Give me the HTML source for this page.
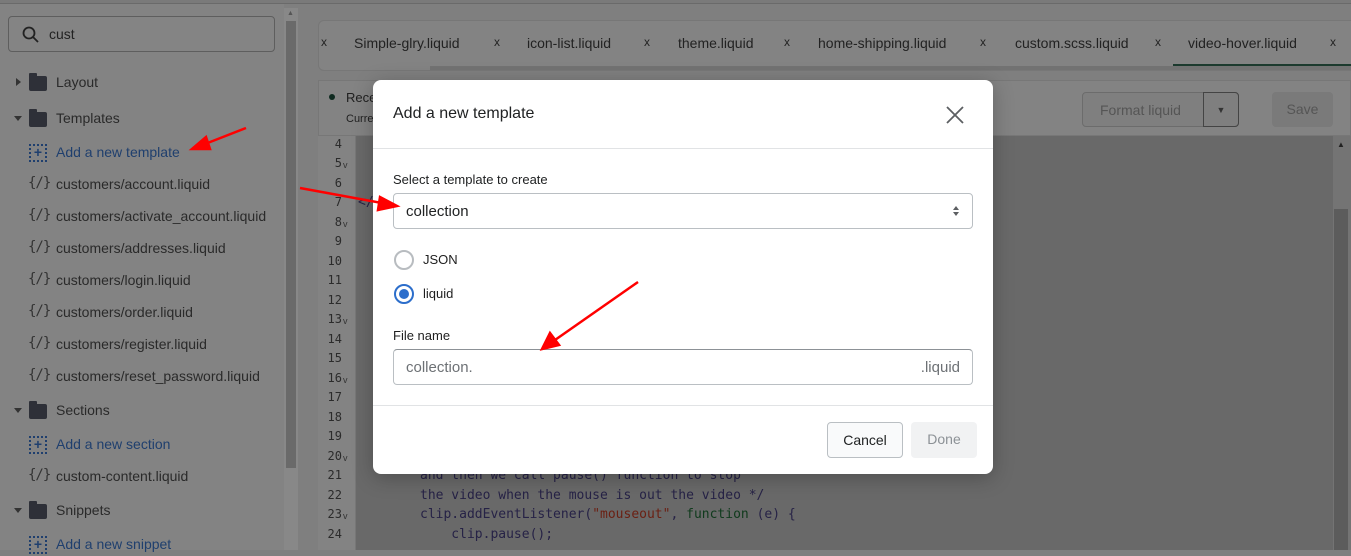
<!DOCTYPE html>
<html><head><meta charset="utf-8"><style>
*{box-sizing:border-box;margin:0;padding:0}
body{width:1351px;height:550px;overflow:hidden;background:#7f7f7f;font-family:"Liberation Sans",sans-serif;position:relative;color:#1f1f1f}
.abs{position:absolute}
.side{left:0;top:0;width:284px;height:550px;background:#838383}
.search{left:8px;top:16px;width:267px;height:36px;border:1px solid #5e5e5e;border-radius:4px;background:#848484;font-size:14px;padding:9px 0 0 40px;color:#222}
.it{left:0;height:20px;font-size:14px;color:#2a2a2a;white-space:nowrap}
.blue{color:#1f3f6e}
.folder{position:absolute;left:29px;top:2px;width:18px;height:15px;background:#2e3038;border-radius:1px 2px 2px 2px}
.folder:before{content:"";position:absolute;left:0;top:-3px;width:8px;height:4px;background:#2e3038;border-radius:1px 1px 0 0}
.tri{position:absolute;left:14px;top:5px;width:0;height:0}
.icn{position:absolute;left:28px;top:-1px;font-family:"DejaVu Sans Mono",monospace;font-size:14px;color:#333;letter-spacing:-1px}
.plus{position:absolute;left:29px;top:0;width:18px;height:18px;border:2px dotted #1f3f6e;color:#1f3f6e;font-size:14px;line-height:13px;text-align:center;font-weight:bold}
.txt{position:absolute;left:56px;top:0}
.code{font-family:"DejaVu Sans Mono",monospace;font-size:13px;color:#262246;white-space:pre}
.ln{left:320px;width:22px;text-align:right;font-family:"DejaVu Sans Mono",monospace;font-size:12px;color:#2b2b2b}
.fv{position:absolute;left:343px;font-size:9px;color:#333}
</style></head><body>
<div class="abs side"></div>
<div class="abs" style="left:0;top:0;width:1351px;height:4px;background:#7a7a7a;border-bottom:1px solid #6a6a6a"></div>
<div class="abs search"><svg class="abs" style="left:13px;top:9px" width="18" height="18" viewBox="0 0 18 18"><circle cx="7" cy="7" r="5.5" fill="none" stroke="#222" stroke-width="1.8"/><path d="M11 11l5 5" stroke="#222" stroke-width="1.8"/></svg>cust</div>
<div class="abs" style="left:284px;top:8px;width:14px;height:542px;background:#888"></div>
<div class="abs" style="left:286px;top:21px;width:10px;height:447px;background:#6a6a6a"></div>
<div class="abs" style="left:287px;top:10px;font-size:7px;color:#555">▲</div>

<div class="abs it" style="top:74px"><div class="tri" style="border-left:5px solid #333;border-top:4px solid transparent;border-bottom:4px solid transparent;left:16px;top:4px"></div><div class="folder"></div><div class="txt">Layout</div></div>
<div class="abs it" style="top:110px"><div class="tri" style="border-top:5px solid #333;border-left:4px solid transparent;border-right:4px solid transparent;top:6px"></div><div class="folder"></div><div class="txt">Templates</div></div>
<div class="abs it" style="top:144px"><div class="plus">+</div><div class="txt blue">Add a new template</div></div>
<div class="abs it" style="top:176px"><div class="icn">{/}</div><div class="txt">customers/account.liquid</div></div>
<div class="abs it" style="top:208px"><div class="icn">{/}</div><div class="txt">customers/activate_account.liquid</div></div>
<div class="abs it" style="top:240px"><div class="icn">{/}</div><div class="txt">customers/addresses.liquid</div></div>
<div class="abs it" style="top:272px"><div class="icn">{/}</div><div class="txt">customers/login.liquid</div></div>
<div class="abs it" style="top:304px"><div class="icn">{/}</div><div class="txt">customers/order.liquid</div></div>
<div class="abs it" style="top:336px"><div class="icn">{/}</div><div class="txt">customers/register.liquid</div></div>
<div class="abs it" style="top:368px"><div class="icn">{/}</div><div class="txt">customers/reset_password.liquid</div></div>
<div class="abs it" style="top:402px"><div class="tri" style="border-top:5px solid #333;border-left:4px solid transparent;border-right:4px solid transparent;top:6px"></div><div class="folder"></div><div class="txt">Sections</div></div>
<div class="abs it" style="top:436px"><div class="plus">+</div><div class="txt blue">Add a new section</div></div>
<div class="abs it" style="top:468px"><div class="icn">{/}</div><div class="txt">custom-content.liquid</div></div>
<div class="abs it" style="top:502px"><div class="tri" style="border-top:5px solid #333;border-left:4px solid transparent;border-right:4px solid transparent;top:6px"></div><div class="folder"></div><div class="txt">Snippets</div></div>
<div class="abs it" style="top:536px"><div class="plus">+</div><div class="txt blue">Add a new snippet</div></div>

<!-- tabs -->
<div class="abs" style="left:318px;top:20px;width:1040px;height:51px;background:#838383;border:1px solid #777;border-radius:6px 0 0 6px"></div>
<div class="abs" style="left:430px;top:66px;width:921px;height:4px;background:#727272"></div>
<div class="abs" style="left:1173px;top:64px;width:178px;height:2px;background:#1c3a2e"></div>
<div class="abs" style="top:35px;left:0;width:1351px;font-size:14px;color:#222;white-space:nowrap">
<span class="abs" style="left:321px;font-size:12px">x</span><span class="abs" style="left:354px">Simple-glry.liquid</span>
<span class="abs" style="left:494px;font-size:12px">x</span><span class="abs" style="left:527px">icon-list.liquid</span>
<span class="abs" style="left:644px;font-size:12px">x</span><span class="abs" style="left:678px">theme.liquid</span>
<span class="abs" style="left:784px;font-size:12px">x</span><span class="abs" style="left:818px">home-shipping.liquid</span>
<span class="abs" style="left:980px;font-size:12px">x</span><span class="abs" style="left:1015px">custom.scss.liquid</span>
<span class="abs" style="left:1155px;font-size:12px">x</span><span class="abs" style="left:1188px">video-hover.liquid</span>
<span class="abs" style="left:1330px;font-size:12px">x</span>
</div>
<!-- toolbar -->
<div class="abs" style="left:318px;top:80px;width:1033px;height:56px;background:#838383;border:1px solid #777"></div>
<div class="abs" style="left:329px;top:94px;width:6px;height:6px;border-radius:50%;background:#0f2a20"></div>
<div class="abs" style="left:346px;top:90px;font-size:13px">Rece</div>
<div class="abs" style="left:346px;top:113px;font-size:11px">Curre</div>
<div class="abs" style="left:1082px;top:92px;width:157px;height:35px;border:1px solid #6c6c6c;border-radius:4px;background:#7f7f7f;font-size:14px;color:#555;padding:9px 0 0 17px">Format liquid</div>
<div class="abs" style="left:1203px;top:92px;width:36px;height:35px;border:1px solid #444;border-radius:0 4px 4px 0;font-size:9px;color:#333;text-align:center;padding-top:12px">▼</div>
<div class="abs" style="left:1272px;top:92px;width:61px;height:35px;border-radius:4px;background:#7a7a7a;font-size:14px;color:#555;text-align:center;padding-top:9px">Save</div>
<!-- code -->
<div class="abs" style="left:318px;top:136px;width:38px;height:414px;background:#838383;border-right:1px solid #777"></div>
<div class="abs" style="left:356px;top:136px;width:977px;height:414px;background:#696969"></div>
<div class="abs" style="left:1333px;top:136px;width:18px;height:414px;background:#747474"></div>
<div class="abs" style="left:1334px;top:209px;width:14px;height:341px;background:#5c5c5c"></div>
<div class="abs" style="left:1337px;top:140px;font-size:8px;color:#222">▲</div>
<div class="abs ln" style="top:137px">4</div><div class="abs ln" style="top:156px">5</div><div class="abs ln" style="top:176px">6</div><div class="abs ln" style="top:195px">7</div><div class="abs ln" style="top:215px">8</div><div class="abs ln" style="top:234px">9</div><div class="abs ln" style="top:254px">10</div><div class="abs ln" style="top:273px">11</div><div class="abs ln" style="top:293px">12</div><div class="abs ln" style="top:312px">13</div><div class="abs ln" style="top:332px">14</div><div class="abs ln" style="top:351px">15</div><div class="abs ln" style="top:371px">16</div><div class="abs ln" style="top:390px">17</div><div class="abs ln" style="top:410px">18</div><div class="abs ln" style="top:429px">19</div><div class="abs ln" style="top:449px">20</div><div class="abs ln" style="top:468px">21</div><div class="abs ln" style="top:488px">22</div><div class="abs ln" style="top:507px">23</div><div class="abs ln" style="top:527px">24</div>
<div class="fv" style="top:160px">v</div><div class="fv" style="top:219px">v</div><div class="fv" style="top:316px">v</div><div class="fv" style="top:375px">v</div><div class="fv" style="top:453px">v</div><div class="fv" style="top:511px">v</div>
<div class="abs code" style="left:358px;top:195px">&lt;/</div>
<div class="abs code" style="left:420px;top:468px">and then we call pause() function to stop</div>
<div class="abs code" style="left:420px;top:488px">the video when the mouse is out the video */</div>
<div class="abs code" style="left:420px;top:507px">clip.addEventListener(<span style="color:#6a1f12">"mouseout"</span>, <span style="color:#0f3a1c">function</span> (e) {</div>
<div class="abs code" style="left:420px;top:527px">    clip.pause();</div>

<!-- modal -->
<div class="abs" style="left:373px;top:80px;width:620px;height:394px;background:#fff;border-radius:8px;box-shadow:0 4px 20px rgba(0,0,0,.25)">
 <div class="abs" style="left:20px;top:25px;font-size:16px;color:#202223">Add a new template</div>
 <svg class="abs" style="left:573px;top:26px" width="18" height="18" viewBox="0 0 18 18"><path d="M1 1L17 17M17 1L1 17" stroke="#5c5f62" stroke-width="1.8"/></svg>
 <div class="abs" style="left:0;top:68px;width:620px;height:1px;background:#e1e3e5"></div>
 <div class="abs" style="left:20px;top:92px;font-size:13px;color:#202223">Select a template to create</div>
 <div class="abs" style="left:20px;top:113px;width:580px;height:36px;border:1px solid #babfc3;border-radius:4px;font-size:15px;padding:9px 0 0 12px;color:#202223">collection
  <svg class="abs" style="right:12px;top:11px" width="8" height="12" viewBox="0 0 8 12"><path d="M4 1L7 5H1zM4 11L7 7H1z" fill="#5c5f62"/></svg></div>
 <div class="abs" style="left:21px;top:170px;width:20px;height:20px;border:2px solid #b8bcc0;border-radius:50%"></div>
 <div class="abs" style="left:50px;top:172px;font-size:13px">JSON</div>
 <div class="abs" style="left:21px;top:204px;width:20px;height:20px;border:2px solid #2c6ecb;border-radius:50%"><div style="margin:3px;width:10px;height:10px;border-radius:50%;background:#2c6ecb"></div></div>
 <div class="abs" style="left:50px;top:206px;font-size:13px">liquid</div>
 <div class="abs" style="left:20px;top:248px;font-size:13px">File name</div>
 <div class="abs" style="left:20px;top:269px;width:580px;height:36px;border:1px solid #babfc3;border-top-color:#8c9196;border-radius:4px;font-size:15px;padding:9px 12px 0 12px;color:#6d7175">collection.<span style="float:right">.liquid</span></div>
 <div class="abs" style="left:0;top:325px;width:620px;height:1px;background:#e1e3e5"></div>
 <div class="abs" style="left:454px;top:342px;width:76px;height:36px;border:1px solid #babfc3;border-radius:4px;background:#f9fafb;font-size:14px;text-align:center;padding-top:9px;color:#202223">Cancel</div>
 <div class="abs" style="left:538px;top:342px;width:66px;height:36px;border-radius:4px;background:#f1f2f3;font-size:14px;text-align:center;padding-top:9px;color:#8c9196">Done</div>
</div>

<!-- arrows -->
<svg class="abs" style="left:0;top:0" width="1351" height="550">
<g stroke="#f00" stroke-width="2.5" fill="#f00">
<line x1="246" y1="128" x2="205" y2="144"/><polygon points="192,149 206,137 210,149"/>
<line x1="300" y1="188" x2="382" y2="203"/><polygon points="397,206 380,197 378,210"/>
<line x1="638" y1="282" x2="555" y2="340"/><polygon points="542,349 550,333 559,345"/>
</g></svg>
</body></html>
